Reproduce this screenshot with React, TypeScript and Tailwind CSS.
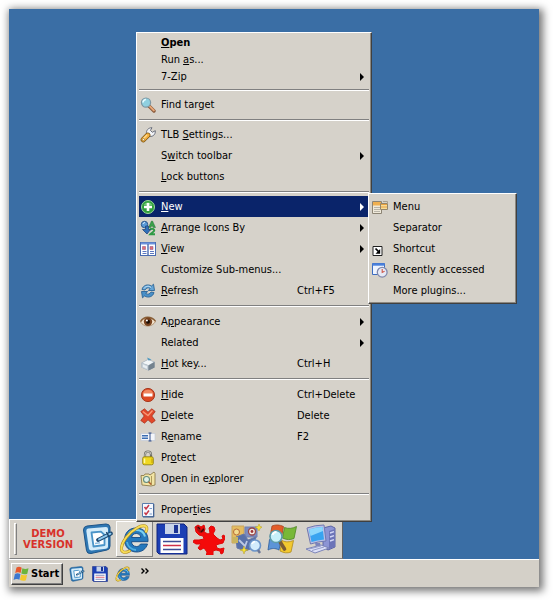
import type { ReactNode } from "react";
import clsx from "clsx";

type Item = {
  // "&" marks the underlined access key
  label: string;
  icon?: ReactNode;
  keys?: string;
  sub?: boolean;
  bold?: boolean;
  active?: boolean;
  compact?: boolean;
};

function FindIcon() {
  return (
    <svg viewBox="0 0 16 16" className="size-4">
      <path d="M9 9l5 5" stroke="#8a5a3a" strokeWidth="3.4" strokeLinecap="round" />
      <path d="M9 8.6l4.8 4.8" stroke="#e8a878" strokeWidth="2" strokeLinecap="round" />
      <circle cx="6" cy="5.6" r="4.6" fill="#8fd0e0" stroke="#7d97a3" strokeWidth="1.2" />
      <path d="M3 5.5a3 3 0 013-3" stroke="#e6fbff" strokeWidth="1.6" fill="none" />
    </svg>
  );
}

function WrenchIcon() {
  return (
    <svg viewBox="0 0 16 16" className="size-4">
      <path
        d="M6.500 7C6 3.500 8 .8 12 .7L10.400 3.400 12.300 5.300 15.300 3.700C15.600 7.500 13 9.800 9.500 9.500z"
        fill="#f2f4f8"
        stroke="#5c6270"
        strokeWidth=".9"
      />
      <path d="M3.300 12.700L7.800 8.200" stroke="#7a5412" strokeWidth="5.200" strokeLinecap="round" />
      <path d="M3.300 12.700L7.800 8.200" stroke="#f4b040" strokeWidth="3.800" strokeLinecap="round" />
      <path d="M3.500 11.500L7 8" stroke="#fbdc94" strokeWidth="1.200" />
      <circle cx="3.400" cy="12.600" r="1.100" fill="#fff8e0" stroke="#7a5412" strokeWidth=".5" />
    </svg>
  );
}

function NewIcon() {
  return (
    <svg viewBox="0 0 16 16" className="size-4">
      <circle cx="8" cy="8" r="6.500" fill="#2f9e3c" stroke="#9ad89a" />
      <path d="M3.500 6a5 5 0 019 0z" fill="#6cc870" />
      <path d="M8 4v8M4 8h8" stroke="#fff" strokeWidth="2.600" />
    </svg>
  );
}

function ArrangeIcon() {
  return (
    <svg viewBox="0 0 16 16" className="size-4">
      <path d="M8.500 7.500l3-6.500h1l3 6.500h-2.200l-.4-1.200h-1.700l-.5 1.200z" fill="#3aa04a" stroke="#27713a" strokeWidth=".5" />
      <path d="M9.800 10.300c.4-2 4.600-2 4.400.3-.2 1.500-3 2.300-4 3.700h4.800" stroke="#2f9a45" strokeWidth="2" fill="none" />
      <circle cx="4.500" cy="4.500" r="3.200" fill="#5b9bd8" stroke="#2b568c" />
      <path d="M5.500 6h3v3.500h2L7 14 2.500 9.500h3z" fill="#2f6fba" stroke="#23477a" strokeWidth=".8" />
      <path d="M3 4a2 2 0 012-1.500" stroke="#d8ecff" fill="none" />
    </svg>
  );
}

function ViewIcon() {
  return (
    <svg viewBox="0 0 16 16" className="size-4">
      <rect x=".5" y="1.500" width="15" height="13" fill="#fff" stroke="#4a6cb0" />
      <path d="M1 2.500h14" stroke="#6c92dc" strokeWidth="2" />
      <path d="M8 3v11" stroke="#4a6cb0" strokeWidth="1.400" />
      <path d="M2.500 5.500h3v3h-3zM10 5.500h3v3h-3z" fill="#e07070" stroke="#9a5a90" strokeWidth=".6" />
      <path d="M2.500 10.500h4M2.500 12.500h4M10 10.500h4M10 12.500h4" stroke="#5c78c0" />
    </svg>
  );
}

function RefreshIcon() {
  return (
    <svg viewBox="0 0 16 16" className="size-4">
      <path d="M2 6.500C3 2 8 .8 11.500 3L13.500 1.200 14.500 7.500H8.400l1.800-2C8 4.200 6 5 5 7z" fill="#65a5d6" stroke="#2b6496" strokeWidth=".9" />
      <path d="M14 9.500c-1 4.500-6 5.700-9.500 3.500L2.500 14.800 1.500 8.500h6.100l-1.800 2c2.200 1.300 4.200.5 5.200-1.500z" fill="#4a90c8" stroke="#2b6496" strokeWidth=".9" />
      <path d="M4 5.500c1.500-2.500 5-3 7-1" stroke="#c8e6fa" fill="none" />
    </svg>
  );
}

function EyeIcon() {
  return (
    <svg viewBox="0 0 16 16" className="size-4">
      <path d="M.5 8C4 2.500 11 2 15.500 7.500 12 13.500 4 13.500.5 8z" fill="#f2e2cc" stroke="#a07850" strokeWidth=".7" />
      <path d="M.5 7.500C4 2 11 1.800 15.500 7.200" stroke="#8a6038" strokeWidth="1.500" fill="none" />
      <circle cx="8" cy="7.800" r="4.200" fill="#7a4420" />
      <circle cx="8" cy="7.800" r="2" fill="#1a0c04" />
      <circle cx="6.900" cy="6.500" r="1" fill="#fff" />
    </svg>
  );
}

function HotKeyIcon() {
  return (
    <svg viewBox="0 0 16 16" className="size-4">
      <path d="M1.500 7L8 3.500 14.500 6v5.500L8.500 14.500 1.500 11.500z" fill="#8494a4" />
      <path d="M1.500 7L8 3.500 14.500 6 8.500 9.500z" fill="#f2f6f8" stroke="#a4b0bc" strokeWidth=".6" />
      <path d="M1.500 7v4.500l7 3v-5z" fill="#c4ced6" />
      <path d="M8.500 9.500v5l6-3V6z" fill="#74828e" />
      <path d="M3 8.500l4 1.800v2.400l-4-1.800z" fill="#e8eef2" />
      <path d="M7 1.500l4.500 2-3 1z" fill="#4c98c0" />
    </svg>
  );
}

function HideIcon() {
  return (
    <svg viewBox="0 0 16 16" className="size-4">
      <circle cx="8" cy="8" r="6.600" fill="#dd4a24" stroke="#a83a20" />
      <path d="M2.700 7a5.400 5.400 0 0110.600 0z" fill="#f08860" />
      <rect x="3.500" y="6.500" width="9" height="3" rx=".6" fill="#fff" />
    </svg>
  );
}

function DeleteIcon() {
  return (
    <svg viewBox="0 0 16 16" className="size-4">
      <path
        d="M.8 3.500L4.500.8 8 4.200 11.800.8l3.400 2.700L11.800 8l3.400 4.500-3.400 2.700L8 11.800l-3.500 3.400-3.700-2.700L4.200 8z"
        fill="#e2482a"
        stroke="#a83420"
        strokeWidth=".8"
        strokeLinejoin="round"
      />
      <path d="M2.800 3.500L8 7.500l4.500-5" stroke="#f89a78" strokeWidth="1.300" fill="none" />
    </svg>
  );
}

function RenameIcon() {
  return (
    <svg viewBox="0 0 16 16" className="size-4">
      <rect x="1" y="4.500" width="14" height="7" fill="#f4f6fa" stroke="#c4cad8" strokeWidth=".7" />
      <path d="M2 6.800h6M2 9.200h6" stroke="#3c6eb4" strokeWidth="1.400" />
      <path d="M8.500 4h3M8.500 12h3M10 4v8" stroke="#34508c" />
    </svg>
  );
}

function ProtectIcon() {
  return (
    <svg viewBox="0 0 16 16" className="size-4">
      <path d="M5 8V4.500a3 3 0 016 0V8" stroke="#70706a" strokeWidth="2.200" fill="none" />
      <path d="M5 7V4.500a3 3 0 016 0" stroke="#dcdcd4" strokeWidth=".8" fill="none" />
      <rect x="2.700" y="6.800" width="10.600" height="8" rx="1.600" fill="#f0d820" stroke="#8a7808" strokeWidth=".8" />
      <path d="M4.500 8.500v4.500" stroke="#fff9a0" strokeWidth="1.500" />
      <path d="M12 8.500v4.500" stroke="#c8a808" strokeWidth="1.200" />
    </svg>
  );
}

function ExplorerIcon() {
  return (
    <svg viewBox="0 0 16 16" className="size-4">
      <path d="M1 4.500h3l1-1.500h4l1 1 4-3 1 1.500V14l-4 1-9-1z" fill="#f2e4a4" stroke="#8c7c4c" strokeWidth=".9" />
      <path d="M11.500 5v9" stroke="#b09c5c" />
      <circle cx="6.500" cy="8.500" r="3" fill="#dff0e8" stroke="#648c7c" strokeWidth="1.100" />
      <path d="M8.600 10.700l2.600 2.800" stroke="#b06030" strokeWidth="1.600" />
    </svg>
  );
}

function PropertiesIcon() {
  return (
    <svg viewBox="0 0 16 16" className="size-4">
      <path d="M2.500 1.500h11v13h-11z" fill="#f4f8ff" stroke="#5a7cac" />
      <path d="M13.800 2v13H3" stroke="#3c5c8c" fill="none" />
      <path d="M4.500 5l1.500 2 3-4M4.500 10.500l1.500 2 3-4" stroke="#c83848" strokeWidth="1.500" fill="none" />
      <path d="M9.500 6.500h2.500M9.500 12h2.500" stroke="#7c9ccc" />
    </svg>
  );
}

function SubMenuIcon() {
  return (
    <svg viewBox="0 0 16 16" className="size-4">
      <path d="M.5 2.500h9v12h-9z" fill="#efe9da" stroke="#8c8474" />
      <path d="M1 3h8v3.500H1z" fill="#f0b050" />
      <path d="M2 8.500h6M2 10.500h6M2 12.500h6" stroke="#b8b4a8" />
      <path d="M8.500 4.500h7v6h-7z" fill="#f6dc98" stroke="#94866c" />
      <path d="M9 5.500h6M9 8h6" stroke="#e8a040" strokeWidth="1.200" />
      <path d="M11 2.500h4.500v2" stroke="#a8a090" fill="none" />
    </svg>
  );
}

function ShortcutIcon() {
  return (
    <svg viewBox="0 0 16 16" className="size-4">
      <path d="M1 5.500h9v9H1z" fill="#fff" stroke="#202020" />
      <path d="M3.500 7.500l3 3" stroke="#000" strokeWidth="1.700" />
      <path d="M8.200 8v4.700H3.500z" fill="#000" />
    </svg>
  );
}

function RecentIcon() {
  return (
    <svg viewBox="0 0 16 16" className="size-4">
      <path d="M.5 1.500h12v11H.5z" fill="#eef4ff" stroke="#3c6cc0" />
      <path d="M.5 2.500h12" stroke="#4a80dc" strokeWidth="2.400" />
      <circle cx="10.200" cy="10.200" r="4.900" fill="#e6eaf6" stroke="#8088ac" strokeWidth="1.300" />
      <path d="M10.200 7v3.400l2.400-1.200" stroke="#d05848" strokeWidth="1.100" fill="none" />
    </svg>
  );
}

function NotepadIcon({ className }: { className: string }) {
  return (
    <svg viewBox="0 0 32 32" className={className}>
      <path d="M5 3l19-2q3.500 0 4 3v19q0 3.500-3 4L9 30.500q-4 .5-4.500-3L1.500 7q0-3.500 3.500-4z" fill="#2f78b4" stroke="#1d5488" />
      <path d="M6 5.500L24 4q2 0 2 2v17.500q0 2-2 2.200L9.500 27.500q-2.300 0-2.600-2L4.300 8q0-2.200 1.700-2.500z" fill="#d4ecfa" />
      <path d="M9.500 9.500l9.500-.8 3.500 3.300V22l-11 1.500z" fill="#fff" stroke="#4a94c8" strokeWidth="1.800" strokeLinejoin="round" />
      <path d="M13 20.500l5-.7" stroke="#8cbce0" strokeWidth="1.500" />
      <path d="M16 17L29 10.500" stroke="#1c4870" strokeWidth="3.800" strokeLinecap="round" />
      <path d="M17 16.400L28.500 10.700" stroke="#8cc8ee" strokeWidth="1.900" strokeLinecap="round" />
      <path d="M24.500 9l2.500 5" stroke="#1c4870" strokeWidth="1.600" />
    </svg>
  );
}

function BrowserIcon({ className }: { className: string }) {
  return (
    <svg viewBox="0 0 32 32" className={className}>
      <path
        d="M17 5C9.500 5 5.500 10.500 5.500 17S10.500 29 17.500 29c5.500 0 9.500-3 11-8h-7c-1 1.800-2.300 2.500-4 2.500-2.900 0-4.800-1.900-5-4.800H29C29.500 10.500 25 5 17 5zm-4.400 9.500c.5-2.500 2.200-4 4.700-4s4.200 1.500 4.500 4z"
        fill="#2478bc"
        stroke="#144a84"
        strokeWidth=".9"
        fillRule="evenodd"
      />
      <path d="M8.500 14C9.500 9.500 13 7 17 7c4.500 0 8 2.400 9 6.500" stroke="#7cd0f0" strokeWidth="2" fill="none" />
      <path d="M8 19c.5 4 4 7.500 9 8" stroke="#50b0e0" strokeWidth="1.800" fill="none" />
      <path
        d="M27 8.500c3-6-2.500-7.500-9-3.500C10 9.500 3.500 18 2.500 24.500c-.8 5 3.500 6 8 3.500"
        stroke="#b08a18"
        strokeWidth="3"
        fill="none"
        strokeLinecap="round"
      />
      <path
        d="M27 8.500c3-6-2.500-7.500-9-3.500C10 9.500 3.500 18 2.500 24.500c-.8 5 3.500 6 8 3.500"
        stroke="#f6dc58"
        strokeWidth="2"
        fill="none"
        strokeLinecap="round"
      />
    </svg>
  );
}

function FloppyIcon({ className }: { className: string }) {
  return (
    <svg viewBox="0 0 32 32" className={className}>
      <path d="M1 1h27l3 3v27H3l-2-2z" fill="#1c3fb4" stroke="#10247c" />
      <path d="M9 1h15v10H9z" fill="#c8d4e8" />
      <path d="M18 2h4v8h-4z" fill="#1c3494" />
      <path d="M4.500 15h23v15h-23z" fill="#fff" />
      <path d="M7 18.500h18M7 26.500h18" stroke="#3c4c94" strokeWidth="1.300" />
      <path d="M7 22.500h18" stroke="#d03048" strokeWidth="1.500" />
    </svg>
  );
}

function SplatIcon() {
  return (
    <svg viewBox="0 0 32 32" className="size-8">
      <path
        d="M2 4l3-2 3 2 3-2 1 4-1 3 4 2 2-1-1-5 2-2 3 1 1 3-2 4 4 4 3 2 3-1-1-3 2-1 1 3-2 5-4 1-3 1 1 3 3 1 4-1-1 5-2 1-1-3-4-1-3 1v5l-3 2-4-1 1-5-3-4-4 2-2-2 3-4-5 0-3-2 1-2 5 0 5-1-1-3-4-1-3-3z"
        fill="#f40a0a"
        stroke="#e00808"
        strokeLinejoin="round"
      />
      <path d="M3 3l3 1 2 3 3-3v5l-4 1-3-3z" fill="#a81010" />
      <path d="M5 4l2 2M8 9l3-3" stroke="#400808" strokeWidth="1.300" />
    </svg>
  );
}

function PuzzleIcon() {
  return (
    <svg viewBox="0 0 32 32" className="size-8">
      <path d="M2 3h12v12l-2 5H2z" fill="#e4bc60" stroke="#c8a45c" />
      <path d="M15 4h12v10H15z" fill="#7c8cc0" stroke="#7080b0" />
      <path d="M6 14l8-3 4 6 8-3-3 11-8 3-8-3z" fill="#5870a8" stroke="#6478a8" />
      <path d="M2 14h6v6H3z" fill="#c8b460" />
      <path d="M9 17l6 6M17 18l-3 8" stroke="#bcc8e4" strokeWidth="1.800" />
      <circle cx="6.500" cy="9" r="3" fill="#f2dc90" stroke="#b86c38" />
      <circle cx="22" cy="8.500" r="3.500" fill="#f2ece4" stroke="#984848" strokeWidth="1.300" />
      <circle cx="22" cy="8.500" r="1.400" fill="#a03434" />
      <path d="M29 1l1 2.500 2 .5-2 1.500L29 8l-1.500-2.500L25 4l3-.5zM14 23l1 3 3 1-3 1-1 3-1-3-3-1 3-1z" fill="#f8e434" stroke="#b89c24" strokeWidth=".5" />
      <circle cx="25" cy="22.500" r="5.500" fill="#d4ecfc" stroke="#6c94c8" strokeWidth="1.600" />
      <path d="M22 21a4 4 0 013-2.500" stroke="#fff" strokeWidth="1.700" fill="none" />
      <path d="M28 27l2 3" stroke="#6c7898" strokeWidth="2.400" />
    </svg>
  );
}

function FlagSearchIcon() {
  return (
    <svg viewBox="0 0 32 32" className="size-8">
      <path d="M5 3c4-1.500 7-1.500 11.500.5L14.500 14C10 12 7 12 3 14z" fill="#e45c28" stroke="#a44420" strokeWidth=".8" />
      <path d="M17.500 4.500c4 1.500 8 1 12-1L27 15.500c-4 1.500-7 1.500-11.500-.5z" fill="#78b838" stroke="#4c8424" strokeWidth=".8" />
      <path d="M2.500 16.500c4-2 7-1.500 11.500.5l-2 10C8 25 5 25 1 27z" fill="#5c94d8" stroke="#2c5c9c" strokeWidth=".8" />
      <path d="M15 17.500c4 2 7.500 1.500 11.500 0L24 29c-4 1.500-7 1-11-1z" fill="#f2c830" stroke="#b08c1c" strokeWidth=".8" />
      <path d="M12.500 18l5 8" stroke="#7c5c34" strokeWidth="3.600" strokeLinecap="round" />
      <circle cx="9" cy="13.500" r="6" fill="#c8f0fa" stroke="#5c9cac" strokeWidth="1.600" />
      <path d="M5.500 12a4 4 0 014-3" stroke="#fff" strokeWidth="2" fill="none" />
    </svg>
  );
}

function ComputerIcon() {
  return (
    <svg viewBox="0 0 32 32" className="size-8">
      <path d="M19 5l8-2 4 2v19l-7 3-5-3z" fill="#8c94d4" stroke="#5c64a4" />
      <path d="M25 8v18l6-2.500V6z" fill="#6c74b8" />
      <path d="M26 10l4-1.300M26 14l4-1.300M26 18l4-1.300" stroke="#d4d8f8" strokeWidth="1.400" />
      <path d="M3 5q8-3 17-3l2 16q-8 .5-15.500 3z" fill="#b8c0e8" stroke="#7078b0" />
      <path d="M5 6.500q7-2.300 13.500-2.500L20 16.500q-6.500.5-12.500 2.500z" fill="#38a4f0" />
      <path d="M5 6.500q7-2.300 13.500-2.500l.5 4L6.500 13z" fill="#8cd8fc" />
      <path d="M11 20h5l1 4h-5z" fill="#7c84bc" />
      <path d="M2 26l15-4 8 3-14 5z" fill="#dce0f8" stroke="#7c84b8" />
      <path d="M5 26l12-3M8 27.500l12-3.500" stroke="#949cc8" />
    </svg>
  );
}

function StartFlag() {
  return (
    <svg viewBox="0 0 16 16" className="size-4">
      <path d="M3.500 1.500c2-1 3.500-.8 5.200.2L7.600 7C6 6 4 6 2.200 7z" fill="#e8582c" />
      <path d="M9.400 2.200c2 1 3.800 1 6.100 0l-1.200 5.600c-2 .8-4 .7-6-.3z" fill="#6cb43c" />
      <path d="M1.900 8c2-1 3.700-.8 5.500.1l-1 5.600c-1.900-1-3.700-1-5.800.2z" fill="#3c78d0" />
      <path d="M8.100 8.500c2 1 3.900 1 6 .2l-1.200 5.500c-2 .8-4 .6-5.900-.3z" fill="#f4c82c" />
    </svg>
  );
}

const sections: Item[][] = [
  [
    { label: "&Open", bold: true, compact: true },
    { label: "Run &as...", compact: true },
    { label: "7-Zip", sub: true, compact: true },
  ],
  [{ label: "Find target", icon: <FindIcon /> }],
  [
    { label: "TLB &Settings...", icon: <WrenchIcon /> },
    { label: "S&witch toolbar", sub: true },
    { label: "&Lock buttons" },
  ],
  [
    { label: "&New", icon: <NewIcon />, sub: true, active: true },
    { label: "&Arrange Icons By", icon: <ArrangeIcon />, sub: true },
    { label: "&View", icon: <ViewIcon />, sub: true },
    { label: "Customize Sub-menus..." },
    { label: "&Refresh", icon: <RefreshIcon />, keys: "Ctrl+F5" },
  ],
  [
    { label: "A&ppearance", icon: <EyeIcon />, sub: true },
    { label: "Related", sub: true },
    { label: "&Hot key...", icon: <HotKeyIcon />, keys: "Ctrl+H" },
  ],
  [
    { label: "&Hide", icon: <HideIcon />, keys: "Ctrl+Delete" },
    { label: "&Delete", icon: <DeleteIcon />, keys: "Delete" },
    { label: "R&ename", icon: <RenameIcon />, keys: "F2" },
    { label: "Pr&otect", icon: <ProtectIcon /> },
    { label: "Open in e&xplorer", icon: <ExplorerIcon /> },
  ],
  [{ label: "Proper&ties", icon: <PropertiesIcon /> }],
];

const newItems: Item[] = [
  { label: "Menu", icon: <SubMenuIcon /> },
  { label: "Separator" },
  { label: "Shortcut", icon: <ShortcutIcon /> },
  { label: "Recently accessed", icon: <RecentIcon /> },
  { label: "More plugins..." },
];

const tools = [
  { name: "Notepad", icon: <NotepadIcon className="size-8" /> },
  { name: "Internet Explorer", icon: <BrowserIcon className="size-8" />, raised: true },
  { name: "Save", icon: <FloppyIcon className="size-8" /> },
  { name: "Splat", icon: <SplatIcon /> },
  { name: "Plugins", icon: <PuzzleIcon /> },
  { name: "Search", icon: <FlagSearchIcon /> },
  { name: "My Computer", icon: <ComputerIcon /> },
];

const quickLaunch = [
  { name: "Notepad", icon: <NotepadIcon className="size-4" /> },
  { name: "Save", icon: <FloppyIcon className="size-4" /> },
  { name: "Internet Explorer", icon: <BrowserIcon className="size-4" /> },
];

function Label({ text }: { text: string }) {
  const at = text.indexOf("&");
  if (at < 0) return <>{text}</>;
  return (
    <>
      {text.slice(0, at)}
      <span className="underline">{text[at + 1]}</span>
      {text.slice(at + 2)}
    </>
  );
}

function MenuItem({ item }: { item: Item }) {
  return (
    <button
      role="menuitem"
      className={clsx(
        "flex w-full items-center px-px text-left whitespace-nowrap",
        item.compact ? "h-[17px]" : "h-[21px]",
        item.active ? "bg-[#0a246a] text-white" : "text-black"
      )}
    >
      <span className="mr-[5px] flex w-4 shrink-0 justify-center">{item.icon}</span>
      <span className={clsx("flex-1", item.bold && "font-bold")}>
        <Label text={item.label} />
      </span>
      {item.keys && <span className="w-[71px]">{item.keys}</span>}
      {item.sub && (
        <svg viewBox="0 0 4 8" className="mr-1 h-2 w-1" fill="currentColor">
          <path d="M0 0l4 4-4 4z" />
        </svg>
      )}
    </button>
  );
}

function Menu({ className, children }: { className: string; children: ReactNode }) {
  return (
    <div
      role="menu"
      className={clsx(
        "absolute border border-t-white border-r-[#404040] border-b-[#404040] border-l-white bg-[#d6d2ca] shadow-[inset_-1px_-1px_0_#8c8880]",
        className
      )}
    >
      {children}
    </div>
  );
}

export default function App() {
  return (
    <div className="flex min-h-screen flex-col bg-white pt-[9px] pr-3.5 pb-[13px] pl-[9px] font-['DejaVu_Sans_Condensed','DejaVu_Sans',sans-serif] text-[11px] leading-4">
      <div className="relative flex flex-1 flex-col bg-[#3a6ea5] shadow-[2px_2px_8px_2px_rgba(0,0,0,0.55)]">
        <main className="flex flex-1 items-end">
          <div className="flex h-10 items-center border border-t-white border-r-[#606060] border-b-[#808080] border-l-white bg-[#d6d2ca] pr-1">
            <span className="ml-1 h-8 w-[3px] border border-t-white border-r-[#808080] border-b-[#808080] border-l-white" />
            <div className="flex w-[62px] flex-col items-center font-['DejaVu_Sans',sans-serif] text-[10px] leading-[11px] font-bold text-[#d8322a]">
              <span>DEMO</span>
              <span>VERSION</span>
            </div>
            {tools.map((t) => (
              <button
                key={t.name}
                aria-label={t.name}
                className={clsx(
                  "flex h-9 w-[37px] items-center justify-center border",
                  t.raised ? "border-t-white border-r-[#808080] border-b-[#808080] border-l-white bg-[#e2dfd8]" : "border-transparent"
                )}
              >
                {t.icon}
              </button>
            ))}
          </div>
        </main>

        <footer className="flex h-7 items-center border-t border-white bg-[#d4d0c8] pl-0.5">
          <button className="flex h-[22px] items-center border border-t-white border-r-[#404040] border-b-[#404040] border-l-white px-px font-bold shadow-[inset_-1px_-1px_0_#808080]">
            <StartFlag />
            <span className="px-0.5">Start</span>
          </button>
          <div className="ml-1.5 flex gap-[7px]">
            {quickLaunch.map((q) => (
              <button key={q.name} aria-label={q.name}>
                {q.icon}
              </button>
            ))}
          </div>
          <button aria-label="More" className="ml-2.5">
            <svg viewBox="0 0 8 6" className="mb-1.5 h-1.5 w-2" fill="none" stroke="#000" strokeWidth="1.400">
              <path d="M.5.5L3 3 .5 5.500M4.500.5L7 3 4.500 5.500" />
            </svg>
          </button>
        </footer>

        <Menu className="top-[23px] left-[127px] w-[236px] px-0.5 py-px">
          {sections.map((items, i) => (
            <div key={i}>
              {i > 0 && (
                <div className={clsx("flex items-center", i > 3 ? "h-2.5" : "h-[9px]")}>
                  <hr className="h-0.5 w-full border-t border-b border-t-[#808080] border-b-white" />
                </div>
              )}
              {items.map((item) => (
                <MenuItem key={item.label} item={item} />
              ))}
            </div>
          ))}
        </Menu>

        <Menu className="top-[184px] left-[359px] w-[149px] p-0.5">
          {newItems.map((item) => (
            <MenuItem key={item.label} item={item} />
          ))}
        </Menu>
      </div>
    </div>
  );
}
